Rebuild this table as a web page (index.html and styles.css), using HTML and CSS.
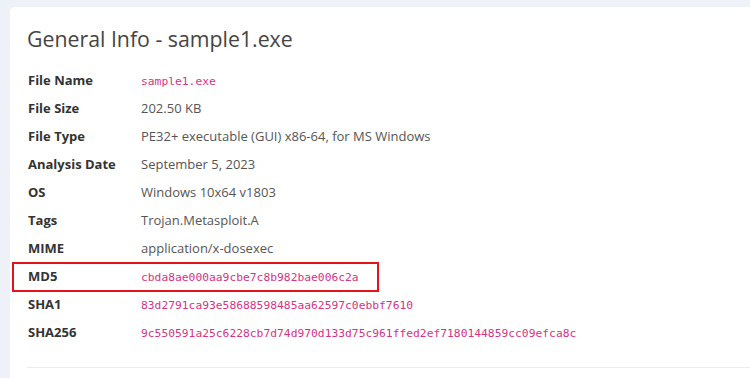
FILE: index.html
```html
<!DOCTYPE html>
<html>
<head>
<meta charset="utf-8">
<link rel="stylesheet" href="styles.css">
</head>
<body>
<div class="card">
  <h2 class="title">General Info - sample1.exe</h2>
  <div class="info">
    <div class="row"><div class="label">File Name</div><div class="value"><code>sample1.exe</code></div></div>
    <div class="row"><div class="label">File Size</div><div class="value">202.50 KB</div></div>
    <div class="row"><div class="label">File Type</div><div class="value">PE32+ executable (GUI) x86-64, for MS Windows</div></div>
    <div class="row"><div class="label">Analysis Date</div><div class="value">September 5, 2023</div></div>
    <div class="row"><div class="label">OS</div><div class="value">Windows 10x64 v1803</div></div>
    <div class="row"><div class="label">Tags</div><div class="value">Trojan.Metasploit.A</div></div>
    <div class="row"><div class="label">MIME</div><div class="value">application/x-dosexec</div></div>
    <div class="row highlighted"><div class="label">MD5</div><div class="value"><code>cbda8ae000aa9cbe7c8b982bae006c2a</code></div><span class="mark"></span></div>
    <div class="row"><div class="label">SHA1</div><div class="value"><code>83d2791ca93e58688598485aa62597c0ebbf7610</code></div></div>
    <div class="row"><div class="label">SHA256</div><div class="value"><code>9c550591a25c6228cb7d74d970d133d75c961ffed2ef7180144859cc09efca8c</code></div></div>
  </div>
  <hr class="rule">
</div>
</body>
</html>
```
FILE: styles.css
```css
html, body {
  margin: 0;
  padding: 0;
}
body {
  background: #eef1f8;
  overflow: hidden;
  width: 750px;
  height: 378px;
  font-family: "Open Sans", "Liberation Sans", sans-serif;
}
.card {
  background: #fff;
  margin: 7px 0 0 10px;
  width: 740px;
  height: 371px;
  border-radius: 5px 0 0 0;
  padding: 16px 0 0 17px;
  box-sizing: border-box;
}
.title {
  margin: 0;
  font-weight: 400;
  font-size: 21.3px;
  line-height: 32px;
  color: #454545;
}
.info {
  margin-top: 11px;
}
.row {
  display: flex;
  align-items: center;
  height: 28px;
  position: relative;
}
.label {
  width: 113px;
  padding-left: 1px;
  font-weight: 700;
  font-size: 13px;
  color: #333;
}
.value {
  font-size: 13px;
  color: #555;
}
code {
  font-family: "DejaVu Sans Mono", "Liberation Mono", monospace;
  font-size: 11.3px;
  color: #d63384;
}
.mark {
  position: absolute;
  left: -15px;
  top: 0;
  width: 363px;
  height: 26px;
  border: 2px solid #e3131b;
}
.rule {
  margin: 21px 0 0 0;
  border: 0;
  border-top: 1px solid #ececec;
}
```
